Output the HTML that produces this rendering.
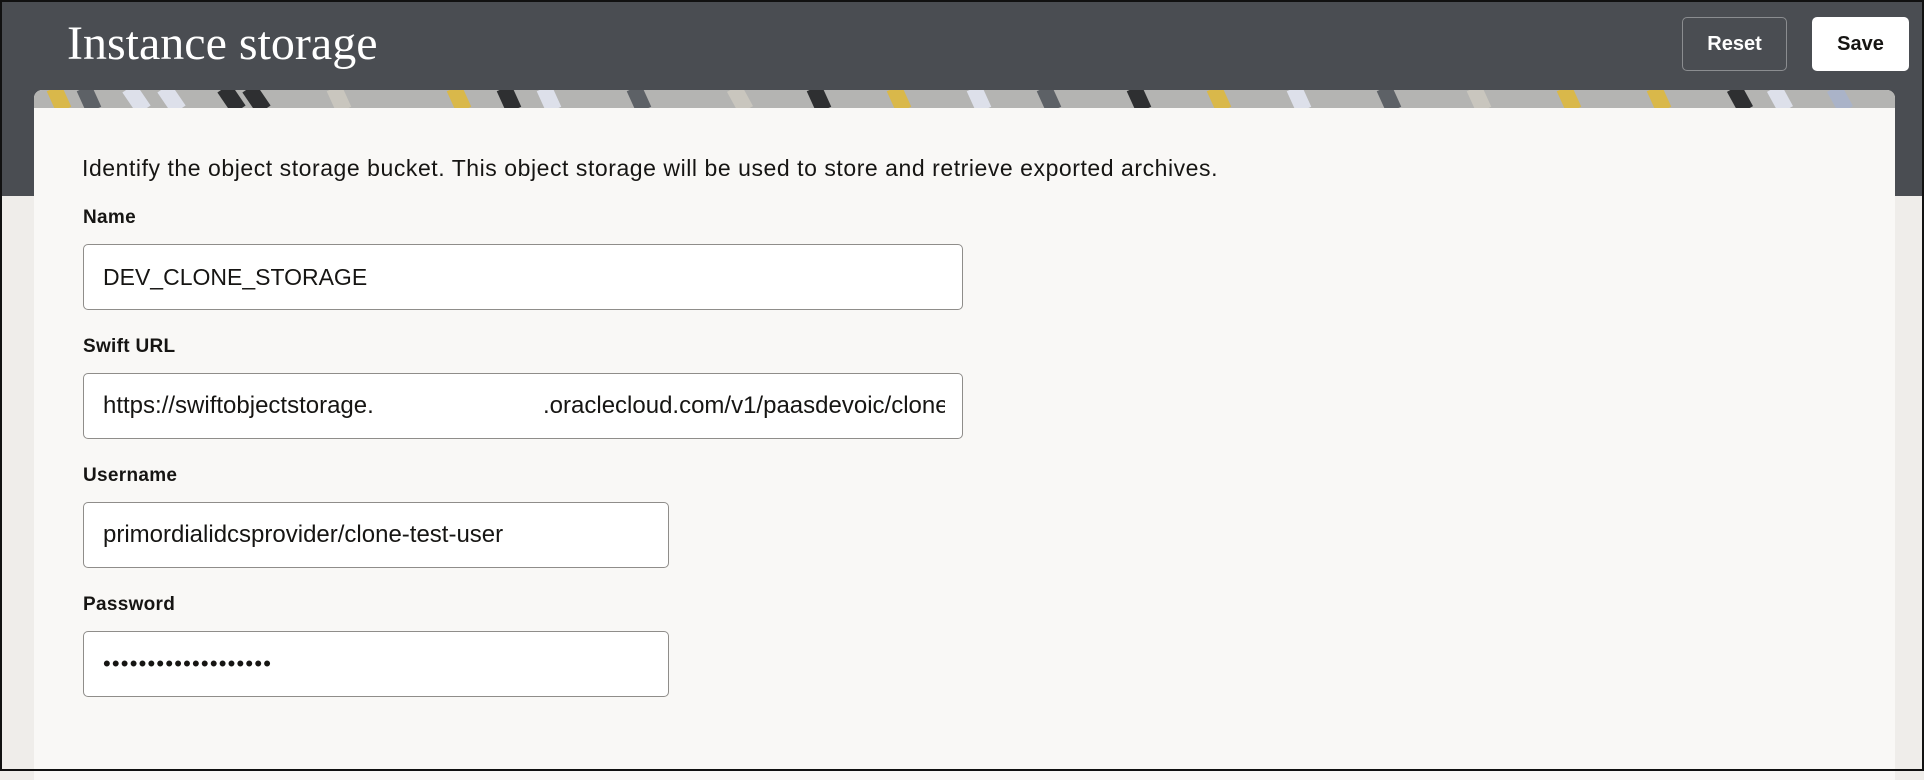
<!DOCTYPE html>
<html><head><meta charset="utf-8"><style>
*{box-sizing:border-box;margin:0;padding:0}
body{width:1924px;height:771px;overflow:hidden;background:#efedea;font-family:"Liberation Sans",sans-serif;position:relative}
.frame{position:absolute;inset:0;border:2px solid #111;z-index:10;pointer-events:none}
.hdr{position:absolute;left:0;top:0;width:1924px;height:196px;background:#4a4d52}
.title{position:absolute;left:67px;top:16px;font-family:"Liberation Serif",serif;font-size:48px;color:#fff}
.btn{position:absolute;top:17px;height:54px;border-radius:5px;font-weight:bold;font-size:20px;display:flex;align-items:center;justify-content:center}
.reset{left:1682px;width:105px;border:1px solid #8b8d90;color:#fff}
.save{left:1812px;width:97px;background:#fff;color:#161513}
.card{position:absolute;left:34px;top:90px;width:1861px;height:690px;background:#f9f8f6;border-radius:8px 8px 0 0;overflow:hidden}
.strip{position:absolute;left:0;top:0;width:100%;height:18px}
.desc{position:absolute;left:48px;top:65px;font-size:23px;letter-spacing:0.55px;color:#161513}
.lbl{position:absolute;left:49px;font-size:19px;letter-spacing:0.3px;font-weight:bold;color:#161513}
.inp{position:absolute;left:49px;height:66px;background:#fff;border:1px solid #8f8d8a;border-radius:5px;font-size:24px;color:#161513;padding-left:19px;line-height:64px;white-space:nowrap;overflow:hidden}
.clip{position:absolute;left:19px;top:0;right:17px;height:64px;overflow:hidden}
</style></head><body>
<div class="hdr"></div>
<div class="title">Instance storage</div>
<div class="btn reset">Reset</div>
<div class="btn save">Save</div>
<div class="card">
<svg class="strip" viewBox="0 0 1861 18" preserveAspectRatio="none">
<rect width="1861" height="18" fill="#b4b4b2"/>
<g stroke-width="16">
<path d="M20 -2 L30 20" stroke="#d9b84a"/><path d="M50 -2 L60 20" stroke="#5d6166"/>
<path d="M95 -2 L110 20" stroke="#dde0ea"/><path d="M130 -2 L145 20" stroke="#dde0ea"/>
<path d="M190 -2 L205 20" stroke="#2e2f31"/><path d="M215 -2 L230 20" stroke="#2e2f31"/>
<path d="M300 -2 L310 20" stroke="#c9c6be"/><path d="M420 -2 L430 20" stroke="#d9b84a"/>
<path d="M470 -2 L480 20" stroke="#2e2f31"/><path d="M510 -2 L520 20" stroke="#dde0ea"/>
<path d="M600 -2 L610 20" stroke="#5d6166"/><path d="M700 -2 L712 20" stroke="#c9c6be"/>
<path d="M780 -2 L790 20" stroke="#2e2f31"/><path d="M860 -2 L870 20" stroke="#d9b84a"/>
<path d="M940 -2 L950 20" stroke="#dde0ea"/><path d="M1010 -2 L1020 20" stroke="#5d6166"/>
<path d="M1100 -2 L1110 20" stroke="#2e2f31"/><path d="M1180 -2 L1190 20" stroke="#d9b84a"/>
<path d="M1260 -2 L1270 20" stroke="#dde0ea"/><path d="M1350 -2 L1360 20" stroke="#5d6166"/>
<path d="M1440 -2 L1450 20" stroke="#c9c6be"/><path d="M1530 -2 L1540 20" stroke="#d9b84a"/>
<path d="M1620 -2 L1630 20" stroke="#d9b84a"/><path d="M1700 -2 L1712 20" stroke="#2e2f31"/>
<path d="M1740 -2 L1752 20" stroke="#dde0ea"/><path d="M1800 -2 L1812 20" stroke="#aab3c8"/>
</g></svg>
<div class="desc">Identify the object storage bucket. This object storage will be used to store and retrieve exported archives.</div>
<div class="lbl" style="top:117px">Name</div>
<div class="inp" style="top:154px;width:880px;font-size:23px">DEV_CLONE_STORAGE</div>
<div class="lbl" style="top:246px">Swift URL</div>
<div class="inp" style="top:283px;width:880px"><div class="clip">https://swiftobjectstorage.<span style="position:absolute;left:440px">.oraclecloud.com/v1/paasdevoic/clone</span></div></div>
<div class="lbl" style="top:375px">Username</div>
<div class="inp" style="top:412px;width:586px">primordialidcsprovider/clone-test-user</div>
<div class="lbl" style="top:504px">Password</div>
<div class="inp" style="top:541px;width:586px;font-size:22px;letter-spacing:1.2px">•••••••••••••••••••</div>
</div>
<div class="frame"></div>
</body></html>
